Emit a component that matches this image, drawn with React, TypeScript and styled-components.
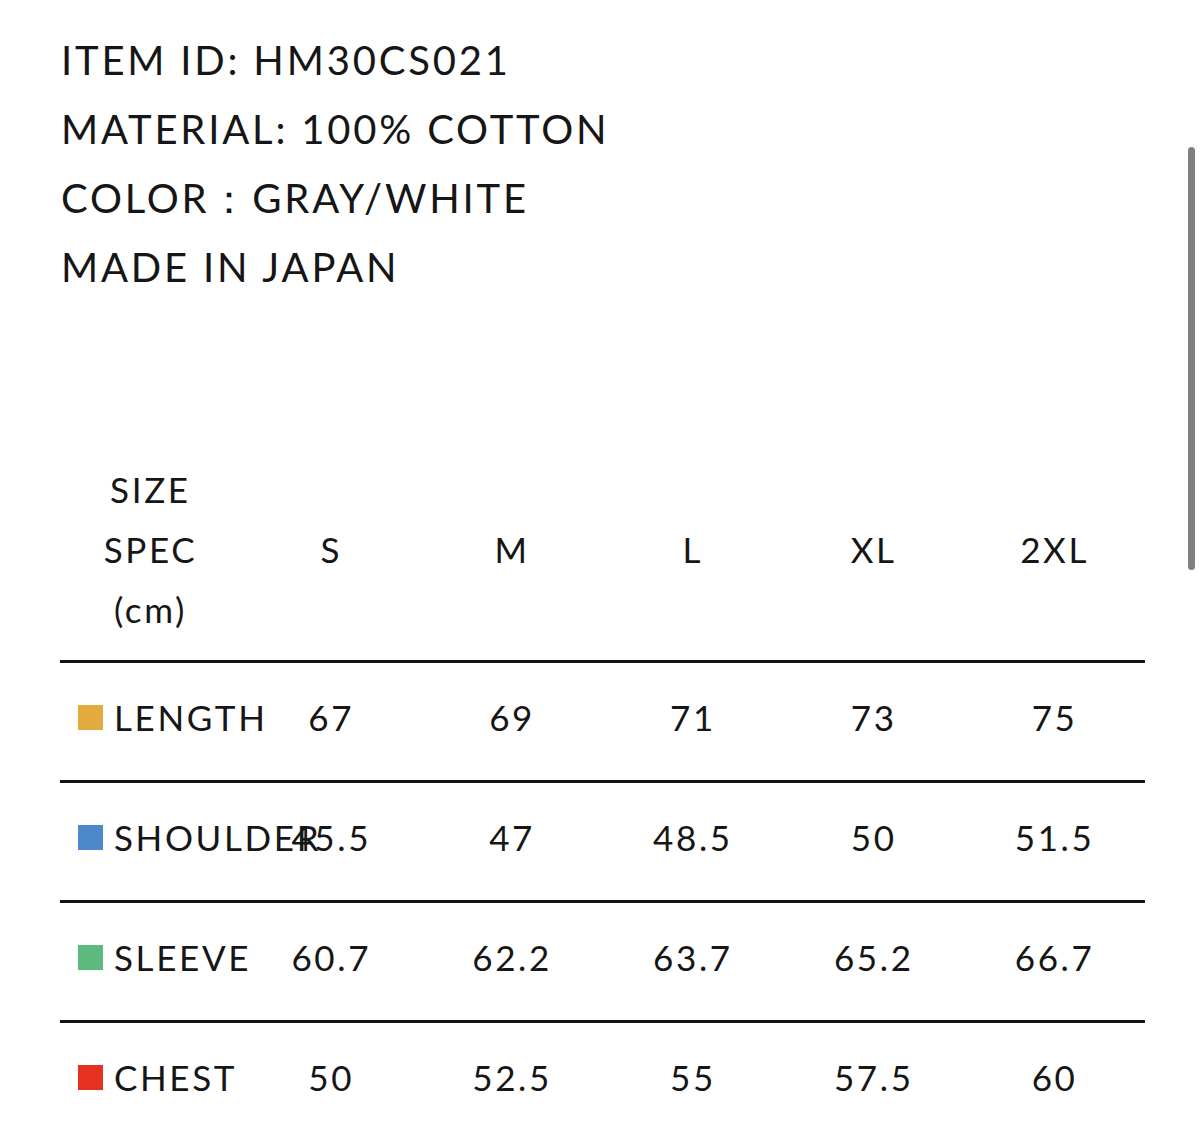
import React from "react";
import styled, { createGlobalStyle } from "styled-components";

const GlobalStyle = createGlobalStyle`
  html, body {
    margin: 0;
    padding: 0;
    background: #ffffff;
  }
  body {
    font-family: Lato, "Noto Sans", "DejaVu Sans", sans-serif;
    font-weight: 400;
    color: #161616;
    overflow: hidden;
  }
`;

const Page = styled.div`
  position: relative;
  width: 1202px;
  height: 1129px;
  overflow: hidden;
  box-sizing: border-box;
  padding: 26px 57px 0 60px;
`;

const Info = styled.div`
  display: flex;
  flex-direction: column;
  padding-left: 1px;
`;

const InfoLine = styled.div`
  font-size: 40px;
  line-height: 69px;
  letter-spacing: 0.07em;
  white-space: nowrap;
`;

const Table = styled.div`
  margin-top: 157px;
  display: grid;
  grid-template-columns: repeat(6, 1fr);
  width: 1085px;
`;

const HeadCell = styled.div`
  display: flex;
  align-items: center;
  justify-content: center;
  padding-bottom: 21px;
  font-size: 35px;
  line-height: 60px;
  letter-spacing: 0.075em;
  text-align: center;
`;

const SpecStack = styled.div`
  display: flex;
  flex-direction: column;
  align-items: center;
`;

const Cell = styled.div<{ $label?: boolean }>`
  display: flex;
  align-items: center;
  justify-content: ${(p) => (p.$label ? "flex-start" : "center")};
  padding: 24px 0 33px ${(p) => (p.$label ? "18px" : "0")};
  border-top: 3px solid #141414;
  font-size: 35px;
  line-height: 60px;
  letter-spacing: 0.075em;
  white-space: nowrap;
  overflow: visible;
  min-width: 0;
`;

const Swatch = styled.span<{ $color: string }>`
  display: inline-block;
  width: 25px;
  height: 25px;
  margin-right: 11px;
  margin-top: 1px;
  background: ${(p) => p.$color};
  flex: none;
`;

const Label = styled.span`
  position: relative;
`;

const Scrollbar = styled.div`
  position: absolute;
  right: 7px;
  top: 147px;
  width: 7px;
  height: 423px;
  border-radius: 4px;
  background: #808080;
`;

const sizes = ["S", "M", "L", "XL", "2XL"];

const rows: { name: string; color: string; values: string[] }[] = [
  { name: "LENGTH", color: "#E3AA3E", values: ["67", "69", "71", "73", "75"] },
  { name: "SHOULDER", color: "#4B89CB", values: ["45.5", "47", "48.5", "50", "51.5"] },
  { name: "SLEEVE", color: "#5EB97E", values: ["60.7", "62.2", "63.7", "65.2", "66.7"] },
  { name: "CHEST", color: "#E5321F", values: ["50", "52.5", "55", "57.5", "60"] },
];

export default function App() {
  return (
    <>
      <GlobalStyle />
      <Page>
        <Info>
          <InfoLine>ITEM ID: HM30CS021</InfoLine>
          <InfoLine>MATERIAL: 100% COTTON</InfoLine>
          <InfoLine>COLOR：GRAY/WHITE</InfoLine>
          <InfoLine>MADE IN JAPAN</InfoLine>
        </Info>
        <Table>
          <HeadCell>
            <SpecStack>
              <span>SIZE</span>
              <span>SPEC</span>
              <span>(cm)</span>
            </SpecStack>
          </HeadCell>
          {sizes.map((s) => (
            <HeadCell key={s}>{s}</HeadCell>
          ))}
          {rows.map((r) => (
            <React.Fragment key={r.name}>
              <Cell $label>
                <Swatch $color={r.color} />
                <Label>{r.name}</Label>
              </Cell>
              {r.values.map((v, i) => (
                <Cell key={i}>{v}</Cell>
              ))}
            </React.Fragment>
          ))}
        </Table>
        <Scrollbar />
      </Page>
    </>
  );
}
